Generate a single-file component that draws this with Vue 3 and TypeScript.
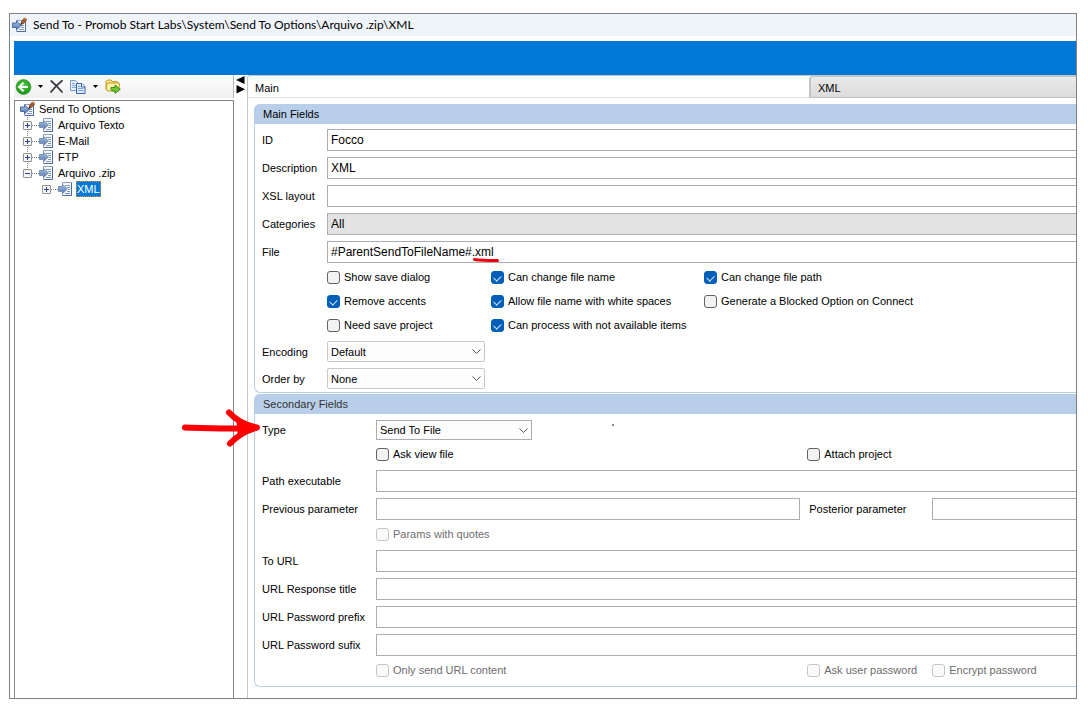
<script setup lang="ts">
import { ref } from 'vue'

interface TextField { id: string; label: string; value: string; readonly?: boolean; marked?: boolean }
interface Check { id: string; label: string; checked: boolean }
interface Choice { id: string; label: string; value: string; options: string[] }
interface TreeItem { label: string; children: string[] }

const tree: TreeItem[] = [
  { label: 'Arquivo Texto', children: [] },
  { label: 'E-Mail', children: [] },
  { label: 'FTP', children: [] },
  { label: 'Arquivo .zip', children: ['XML'] },
]

const mainFields = ref<TextField[]>([
  { id: 'f-id', label: 'ID', value: 'Focco' },
  { id: 'f-desc', label: 'Description', value: 'XML' },
  { id: 'f-xsl', label: 'XSL layout', value: '' },
  { id: 'f-cat', label: 'Categories', value: 'All', readonly: true },
  { id: 'f-file', label: 'File', value: '#ParentSendToFileName#.xml', marked: true },
])

const checkColumns = ref<Check[][]>([
  [
    { id: 'c-save', label: 'Show save dialog', checked: false },
    { id: 'c-accent', label: 'Remove accents', checked: true },
    { id: 'c-need', label: 'Need save project', checked: false },
  ],
  [
    { id: 'c-name', label: 'Can change file name', checked: true },
    { id: 'c-space', label: 'Allow file name with white spaces', checked: true },
    { id: 'c-items', label: 'Can process with not available items', checked: true },
  ],
  [
    { id: 'c-path', label: 'Can change file path', checked: true },
    { id: 'c-block', label: 'Generate a Blocked Option on Connect', checked: false },
  ],
])

const choices = ref<Choice[]>([
  { id: 's-enc', label: 'Encoding', value: 'Default', options: ['Default', 'UTF-8'] },
  { id: 's-ord', label: 'Order by', value: 'None', options: ['None', 'Description'] },
])

const urlFields = ref<TextField[]>([
  { id: 'u-url', label: 'To URL', value: '' },
  { id: 'u-title', label: 'URL Response title', value: '' },
  { id: 'u-prefix', label: 'URL Password prefix', value: '' },
  { id: 'u-sufix', label: 'URL Password sufix', value: '' },
])

const sendType = ref('Send To File')
const askView = ref(false)
const attach = ref(false)
</script>

<template>
  <div class="page">
    <svg width="0" height="0" class="defs" aria-hidden="true">
      <defs>
        <linearGradient id="blueArrow" x1="0" y1="0" x2="0" y2="1">
          <stop offset="0" stop-color="#a9c4e8" />
          <stop offset="1" stop-color="#4f76b4" />
        </linearGradient>
        <radialGradient id="greenBall" cx=".5" cy=".4" r=".6">
          <stop offset="0" stop-color="#55cf45" />
          <stop offset="1" stop-color="#149016" />
        </radialGradient>
        <symbol id="doc" viewBox="0 0 16 16">
          <path d="M4.500 1.500h9v13h-9z" fill="#f6f9fe" stroke="#8b9dc0" />
          <path d="M13.500 2v12.500H5" fill="none" stroke="#4d689c" />
          <path d="M7 4.500h5M9 6.500h3M10 8.500h2M9 10.500h3M7 12.500h5" stroke="#7f96bf" />
          <path d="M.5 5.500h4v-2.200L9.300 8l-4.800 4.700v-2.200h-4z" fill="url(#blueArrow)" stroke="#7d90ae" />
        </symbol>
        <symbol id="docPen" viewBox="0 0 16 16">
          <path d="M4.500 3.500h9v11h-9z" fill="#f6f9fe" stroke="#8b9dc0" />
          <path d="M13.500 5v9.500H5" fill="none" stroke="#4d689c" />
          <path d="M9 8.500h3M9 10.500h3M7 12.500h5" stroke="#7f96bf" />
          <path d="M.5 6h4V3.800L9.300 8.500l-4.800 4.200v-2.200h-4z" fill="url(#blueArrow)" stroke="#4a6ba3" />
          <path d="M8.300 8.200l.8-3 2 1.700z" fill="#222" />
          <path d="M9 5.300L12.200 1l2.600 2-3.600 4z" fill="#a65d2c" stroke="#6f3a1b" stroke-width=".6" />
          <path d="M12.200 1.200l1-1 2.300 1.800-.7 1.100z" fill="#d7a071" />
        </symbol>
      </defs>
    </svg>

    <main class="window">
      <header class="titlebar">
        <svg class="ico"><use href="#docPen" /></svg>
        <span>Send To - Promob Start Labs\System\Send To Options\Arquivo .zip\XML</span>
      </header>

      <div class="client">
        <div class="banner"></div>
        <div class="columns">
          <aside class="side">
            <div class="toolbar">
              <button class="tool" aria-label="Back">
                <svg width="17" height="16" viewBox="0 0 17 16">
                  <circle cx="8.500" cy="8" r="7.400" fill="url(#greenBall)" stroke="#3e9c37" stroke-width=".8" />
                  <path d="M8.500 3.700L4.200 8l4.300 4.300M4.600 8h8.400" fill="none" stroke="#fff" stroke-width="2.200" />
                </svg>
              </button>
              <button class="tool caret" aria-label="Back menu">
                <svg width="5" height="3" viewBox="0 0 5 3"><path d="M0 0h5L2.500 3z" /></svg>
              </button>
              <button class="tool del" aria-label="Delete">
                <svg width="13" height="13" viewBox="0 0 13 13">
                  <path d="M1.200 1c3 2.500 7 6.500 10.800 11M12 .8C8 4 4.500 7.500 1 12" fill="none" stroke="#393c43" stroke-width="1.800" stroke-linecap="round" />
                </svg>
              </button>
              <button class="tool copy" aria-label="Copy">
                <svg width="16" height="14" viewBox="0 0 16 14">
                  <path d="M.5.5h5l3 3v7h-8z" fill="#e6effc" stroke="#7b9bd0" />
                  <path d="M2 3.500h3M2 5.500h4M2 7.500h4" stroke="#7fa3dc" />
                  <path d="M6.500 3.500h5.500l3 3v7H6.500z" fill="#dce9fb" stroke="#3e64ac" />
                  <path d="M11.500 3.500v3.500h3.500" fill="#fff" stroke="#3e64ac" />
                  <path d="M8 6.500h2.500M8 8.500h5.500M8 10.500h5.500" stroke="#7fa3dc" />
                </svg>
              </button>
              <button class="tool caret2" aria-label="Copy menu">
                <svg width="5" height="3" viewBox="0 0 5 3"><path d="M0 0h5L2.500 3z" /></svg>
              </button>
              <button class="tool folder" aria-label="Export folder">
                <svg width="16" height="15" viewBox="0 0 16 15">
                  <path d="M1 10V2.500L2.500 1h3.500l1.500 1.500H12l1 1V5" fill="#fbe48b" stroke="#c79a21" />
                  <path d="M3 12L1 10.500l1-6L3.500 4H14l.5 1-1 7z" fill="#fdf0a8" stroke="#c79a21" />
                  <path d="M6 8.500h4V6l5.300 4.300-5.300 4.200V12H8c-1.500 0-2-1.500-2-3.500z" fill="#71c931" stroke="#328414" stroke-width=".9" />
                </svg>
              </button>
            </div>

            <nav class="tree" aria-label="Send To Options">
              <div class="node">
                <svg class="ico"><use href="#docPen" /></svg>
                <span class="name">Send To Options</span>
              </div>
              <ul class="top">
                <li v-for="item in tree" :key="item.label">
                  <div class="node">
                    <button class="knob" :class="{ open: item.children.length }" :aria-label="'Toggle ' + item.label"></button>
                    <span class="dots"></span>
                    <svg class="ico"><use href="#doc" /></svg>
                    <span class="name">{{ item.label }}</span>
                  </div>
                  <ul v-if="item.children.length" class="sub">
                    <li v-for="child in item.children" :key="child">
                      <div class="node">
                        <button class="knob" :aria-label="'Toggle ' + child"></button>
                        <span class="dots"></span>
                        <svg class="ico"><use href="#doc" /></svg>
                        <span class="name selected">{{ child }}</span>
                      </div>
                    </li>
                  </ul>
                </li>
              </ul>
            </nav>
          </aside>

          <div class="splitter">
            <svg width="9" height="18" viewBox="0 0 9 18"><path d="M8.500 0v8L0 4zM.5 9v8.500L9 13.200z" /></svg>
          </div>

          <section class="content">
            <div class="tabs" role="tablist">
              <button class="tab active" role="tab" aria-selected="true">Main</button>
              <button class="tab" role="tab" aria-selected="false">XML</button>
            </div>

            <div class="groups">
              <section class="group">
                <h2>Main Fields</h2>
                <div class="form main-form">
                  <template v-for="f in mainFields" :key="f.id">
                    <label :for="f.id">{{ f.label }}</label>
                    <div class="field">
                      <input :id="f.id" v-model="f.value" type="text" class="text cut" :readonly="f.readonly" />
                      <svg v-if="f.marked" class="underline" viewBox="0 0 26 4"><path d="M1.500 1.500C8 2.500 16 2.500 24.500 2.500" /></svg>
                    </div>
                  </template>
                  <div class="checks">
                    <div v-for="(col, i) in checkColumns" :key="i" class="check-col">
                      <label v-for="c in col" :key="c.id" class="check">
                        <input v-model="c.checked" type="checkbox" />{{ c.label }}
                      </label>
                    </div>
                  </div>
                  <template v-for="s in choices" :key="s.id">
                    <label :for="s.id">{{ s.label }}</label>
                    <div class="pick">
                      <select :id="s.id" v-model="s.value">
                        <option v-for="o in s.options" :key="o">{{ o }}</option>
                      </select>
                      <svg class="chev" viewBox="0 0 9 5"><path d="M.5.5l4 4 4-4" /></svg>
                    </div>
                  </template>
                </div>
              </section>

              <section class="group second">
                <h2>Secondary Fields</h2>
                <div class="form second-form">
                  <label for="s-type" class="c1 type-label">Type
                    <svg class="arrow" viewBox="0 0 80 38">
                      <path d="M4 18.500C25 19 45 20 66 19.500" />
                      <path d="M48 3.500C54 10 63 16 76 18.500C63 22 55 28 49 34.500" />
                      <path class="tip" d="M55 8L79 18.500L57 29z" />
                    </svg>
                  </label>
                  <div class="pick type">
                    <select id="s-type" v-model="sendType">
                      <option>Send To File</option>
                      <option>Send To E-Mail</option>
                    </select>
                    <svg class="chev" viewBox="0 0 9 5"><path d="M.5.5l4 4 4-4" /></svg>
                    <i class="speck"></i>
                  </div>
                  <label class="check c2"><input v-model="askView" type="checkbox" />Ask view file</label>
                  <label class="check c3"><input v-model="attach" type="checkbox" />Attach project</label>

                  <label for="p-exe" class="c1">Path executable</label>
                  <input id="p-exe" type="text" class="text cut wide" />
                  <label for="p-prev" class="c1">Previous parameter</label>
                  <input id="p-prev" type="text" class="text prev" />
                  <label for="p-post" class="post">Posterior parameter</label>
                  <input id="p-post" type="text" class="text cut" />
                  <label class="check c2 off"><input type="checkbox" disabled />Params with quotes</label>

                  <template v-for="f in urlFields" :key="f.id">
                    <label :for="f.id" class="c1">{{ f.label }}</label>
                    <input :id="f.id" v-model="f.value" type="text" class="text cut wide" />
                  </template>
                  <label class="check c2 off"><input type="checkbox" disabled />Only send URL content</label>
                  <label class="check c3 off"><input type="checkbox" disabled />Ask user password</label>
                  <label class="check c4 off"><input type="checkbox" disabled />Encrypt password</label>
                </div>
              </section>
            </div>
          </section>
        </div>
      </div>
    </main>
  </div>
</template>

<style>
body { background: #fff; }
</style>

<style scoped>
* { box-sizing: border-box; }
.page {
  display: flex;
  min-height: 100vh;
  padding: 13px 11px 9px 9px;
  font: 11px/16px "Liberation Sans", Arial, sans-serif;
  color: #000;
}
.defs { position: absolute; }
button, input, select { font: inherit; color: inherit; margin: 0; }
button { padding: 0; border: 0; background: none; }
.window {
  flex: 1;
  min-width: 0;
  display: flex;
  flex-direction: column;
  border: 1px solid #808080;
  overflow: hidden;
}
.titlebar {
  display: flex;
  align-items: center;
  gap: 5px;
  height: 22px;
  padding-left: 2px;
  background: #eff3fa;
  font: 12px/16px Lato, "Open Sans", sans-serif;
  white-space: nowrap;
}
.ico { width: 16px; height: 16px; flex: none; }
.client { flex: 1; display: flex; flex-direction: column; padding: 5px 0 0 4px; }
.banner { height: 34px; background: #0078d7; }
.columns { flex: 1; display: flex; min-width: 0; }
.side { width: 220px; flex: none; display: flex; flex-direction: column; gap: 2px; }
.toolbar {
  display: flex;
  align-items: center;
  height: 23px;
  padding-left: 1px;
  background: linear-gradient(#fdfdfd, #efefef);
  border-right: 1px solid #b9b9b9;
}
.tool { display: flex; align-items: center; justify-content: center; }
.caret { width: 17px; }
.del { width: 15px; }
.copy { width: 28px; }
.caret2 { width: 6px; }
.folder { width: 29px; }
.tree { flex: 1; padding-left: 5px; border: 1px solid #828790; border-bottom: 0; }
.tree ul { list-style: none; margin: 0; padding: 0 0 0 3px; }
.tree .sub { padding-left: 19px; }
.node { display: flex; align-items: center; height: 16px; white-space: nowrap; }
.name { padding: 0 1px; margin-left: 2px; }
.selected { background: #0078d7; color: #fff; outline: 1px dotted #e08a2c; outline-offset: -1px; }
.knob {
  width: 9px;
  height: 9px;
  border: 1px solid #919191;
  border-radius: 1px;
  background:
    linear-gradient(#28469a, #28469a) center / 5px 1px no-repeat,
    linear-gradient(#28469a, #28469a) center / 1px 5px no-repeat,
    #f8f8f8;
}
.knob.open { background: linear-gradient(#28469a, #28469a) center / 5px 1px no-repeat, #f8f8f8; }
.dots { width: 7px; border-top: 1px dotted #808080; }
.top > li > .node { background: repeating-linear-gradient(#808080 0 1px, transparent 1px 2px) 4px 0 / 1px 100% no-repeat; }
.top > li:last-child > .node { background-size: 1px 50%; }
.splitter { width: 13px; flex: none; padding: 1px 0 0 2px; }
.splitter svg { display: block; }
.content {
  flex: 1;
  min-width: 0;
  border: 1px solid #c3c3c3;
  border-width: 1px 0 0 1px;
  border-top-left-radius: 3px;
}
.tabs { display: grid; grid-template-columns: 21fr 10fr; height: 22px; }
.tab {
  padding: 2px 7px 0;
  text-align: left;
  border: 1px solid #c3c3c3;
  border-width: 1px 0 1px 2px;
  border-radius: 3px 0 0;
  background: linear-gradient(#e9e9e9, #dcdcdc);
}
.tab.active { border: 0; border-bottom: 1px solid #dedede; background: #fff; }
.groups { display: flex; flex-direction: column; gap: 1px; padding: 6px 0 11px 6px; }
.group { border: 1px solid #b9d0ea; border-width: 0 0 1px 1px; border-radius: 6px 0 0 6px; }
h2 {
  height: 20px;
  margin: 0 0 0 -1px;
  padding: 0 9px;
  font: inherit;
  line-height: 20px;
  background: #b9cfe9;
  border-top-left-radius: 6px;
}
.second h2 { color: #333; }
.form { display: grid; align-items: center; padding-left: 7px; white-space: nowrap; }
.main-form { grid-template-columns: 65px minmax(0, 1fr); row-gap: 6px; padding-top: 5px; padding-bottom: 3px; }
.second-form { grid-template-columns: 114px minmax(0, 3fr) 125px minmax(0, 1fr); row-gap: 6px; padding-top: 6px; padding-bottom: 6px; }
.field { position: relative; display: flex; }
.text {
  width: 100%;
  min-width: 0;
  height: 22px;
  padding: 0 3px;
  border: 1px solid #abadb3;
  border-radius: 0;
  outline: 0;
  background: #fff;
  font-size: 12px;
}
.text.cut { border-right: 0; }
.text:read-only { background: #e3e3e3; }
.wide { grid-column: 2 / -1; }
.prev { width: calc(100% - 7px); }
.post { padding-left: 2px; }
.underline { position: absolute; left: 146px; top: 17px; width: 26px; height: 4px; overflow: visible; }
.underline path { fill: none; stroke: #f0000f; stroke-width: 3; stroke-linecap: round; }
.checks { grid-column: 2; display: flex; margin: -4px 0 -2px; }
.check-col { width: 213px; }
.check-col:first-child { width: 164px; }
.check { display: flex; align-items: center; gap: 4px; height: 24px; }
.check input {
  appearance: none;
  display: flex;
  justify-content: center;
  width: 13px;
  height: 13px;
  border: 1px solid #626262;
  border-radius: 3px;
  background: #f3f3f3;
}
.check input:checked { border-color: #005fb8; background: #005fb8; }
.check input:checked::after {
  content: "";
  width: 4px;
  height: 6px;
  margin-top: 2px;
  border: solid #cfe0f2;
  border-width: 0 1px 1px 0;
  transform: rotate(45deg);
}
.check.off { color: #6d6d6d; }
.check.off input { border-color: #c5c5c5; background: #fafafa; }
.second-form .check { margin: -4px 0 -2px; }
.c1 { grid-column: 1; }
.c2 { grid-column: 2; }
.c3 { grid-column: 3; }
.c4 { grid-column: 4; }
.pick { position: relative; width: 158px; height: 21px; }
.pick select {
  appearance: none;
  display: block;
  width: 100%;
  height: 100%;
  padding: 0 20px 0 3px;
  border: 1px solid #c8c8c8;
  border-radius: 2px;
  background: #fdfdfd;
}
.pick.type { width: 156px; height: 20px; }
.pick.type select { border-color: #abadb3; border-radius: 0; }
.chev { position: absolute; right: 4px; top: 8px; width: 9px; height: 5px; pointer-events: none; }
.chev path { fill: none; stroke: #555; }
.speck { position: absolute; left: 236px; top: 4px; width: 2px; height: 2px; background: #8a8a8a; }
.type-label { position: relative; }
.arrow { position: absolute; left: -81px; top: -13px; width: 80px; height: 38px; pointer-events: none; }
.arrow path { fill: none; stroke: #fe0000; stroke-width: 6; stroke-linecap: round; stroke-linejoin: round; }
.arrow .tip { fill: #fe0000; stroke: none; }
</style>
